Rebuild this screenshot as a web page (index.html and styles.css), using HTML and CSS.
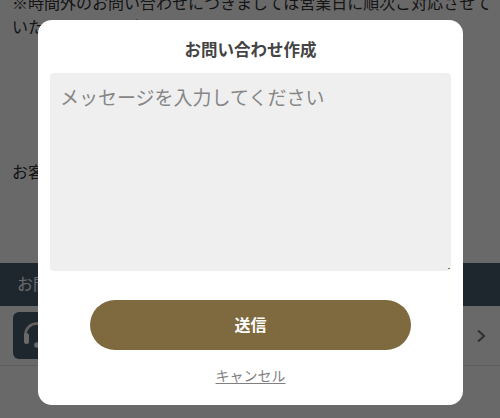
FILE: index.html
```html
<!DOCTYPE html>
<html lang="ja">
<head>
<meta charset="utf-8">
<title>お問い合わせ作成</title>
<link rel="stylesheet" href="styles.css">
</head>
<body>
<main class="page">
  <section class="notice">
    <p class="notice-text">※時間外のお問い合わせにつきましては営業日に順次ご対応させていただきます。ご了承ください。</p>
    <p class="customer">お客様サポート</p>
  </section>
  <h2 class="band">お問い合わせ</h2>
  <div class="row">
    <div class="row-icon">
      <svg viewBox="0 0 47 47" width="47" height="47" fill="none" stroke="#fff" stroke-opacity=".9" stroke-width="2.6"><path d="M12.300 25v-2a11.500 11.500 0 0 1 23 0v2"/><rect x="11" y="21" width="5" height="11" rx="2.500" fill="#fff" stroke="none"/><circle cx="24" cy="33" r="2.800" fill="#fff" stroke="none"/></svg>
    </div>
    <svg class="chevron" viewBox="0 0 10 14" width="10" height="14" fill="none" stroke="#777" stroke-width="2.2"><path d="M2 1.500 8 7l-6 5.500"/></svg>
  </div>
</main>
<div class="overlay">
  <form class="modal">
    <h1 class="modal-title">お問い合わせ作成</h1>
    <div class="message-wrap">
      <textarea class="message" placeholder="メッセージを入力してください"></textarea>
      <span class="grip"></span>
    </div>
    <button class="send" type="button">送信</button>
    <a class="cancel" href="#">キャンセル</a>
  </form>
</div>
</body>
</html>
```
FILE: styles.css
```css
* { box-sizing: border-box; }
html, body { margin: 0; height: 418px; overflow: hidden; }
body {
  position: relative;
  background: #fff;
  color: #333;
  font-family: "Noto Sans CJK JP", "Noto Sans", sans-serif;
  font-size: 16px;
}
.page { display: flex; flex-direction: column; height: 418px; }
.notice { height: 263px; padding: 0 8px 0 12px; }
.notice-text { margin: -10px 0 0; line-height: 24px; }
.customer { margin: 121px 0 0; line-height: 24px; }
.band {
  margin: 0;
  height: 43px;
  padding: 0 17px;
  background: #4a5f6e;
  color: #fff;
  font-size: 16px;
  font-weight: 400;
  line-height: 40px;
}
.row {
  height: 60px;
  padding: 0 14px 0 13px;
  display: flex;
  align-items: center;
  justify-content: space-between;
  border-bottom: 1px solid #e3e3e3;
}
.row-icon { width: 47px; height: 47px; border-radius: 6px; background: #4a5f6e; }
.row-icon svg { display: block; }
.chevron { display: block; }
.overlay {
  position: absolute;
  inset: 0;
  background: rgba(0, 0, 0, .59);
}
.modal {
  position: absolute;
  left: 38px;
  top: 20px;
  width: 425px;
  height: 385px;
  padding: 0 12px;
  background: #fff;
  border-radius: 14px;
  display: flex;
  flex-direction: column;
  align-items: center;
}
.modal-title {
  margin: 0;
  height: 53px;
  color: #444;
  font-size: 16.500px;
  font-weight: 700;
  line-height: 59px;
  text-align: center;
}
.message-wrap { position: relative; width: 401px; height: 198px; }
.message {
  display: block;
  width: 100%;
  height: 100%;
  padding: 11px 10px;
  border: 0;
  border-radius: 4px;
  background: #efefef;
  color: #333;
  font-family: inherit;
  font-size: 19px;
  line-height: 26px;
  outline: 0;
  resize: none;
}
.message::placeholder { color: #868686; opacity: 1; }
.grip {
  position: absolute;
  right: 1px;
  bottom: 2px;
  width: 2px;
  height: 1px;
  background: #777;
}
.send {
  width: 321px;
  height: 50px;
  margin-top: 29px;
  padding: 0 0 3px;
  border: 0;
  border-radius: 25px;
  background: #7f6a3f;
  color: #fff;
  font-family: inherit;
  font-size: 16px;
  font-weight: 700;
}
.cancel {
  margin-top: 14px;
  color: #808080;
  font-size: 14px;
  line-height: 22px;
  text-decoration: underline;
  text-underline-offset: 2px;
}
```
